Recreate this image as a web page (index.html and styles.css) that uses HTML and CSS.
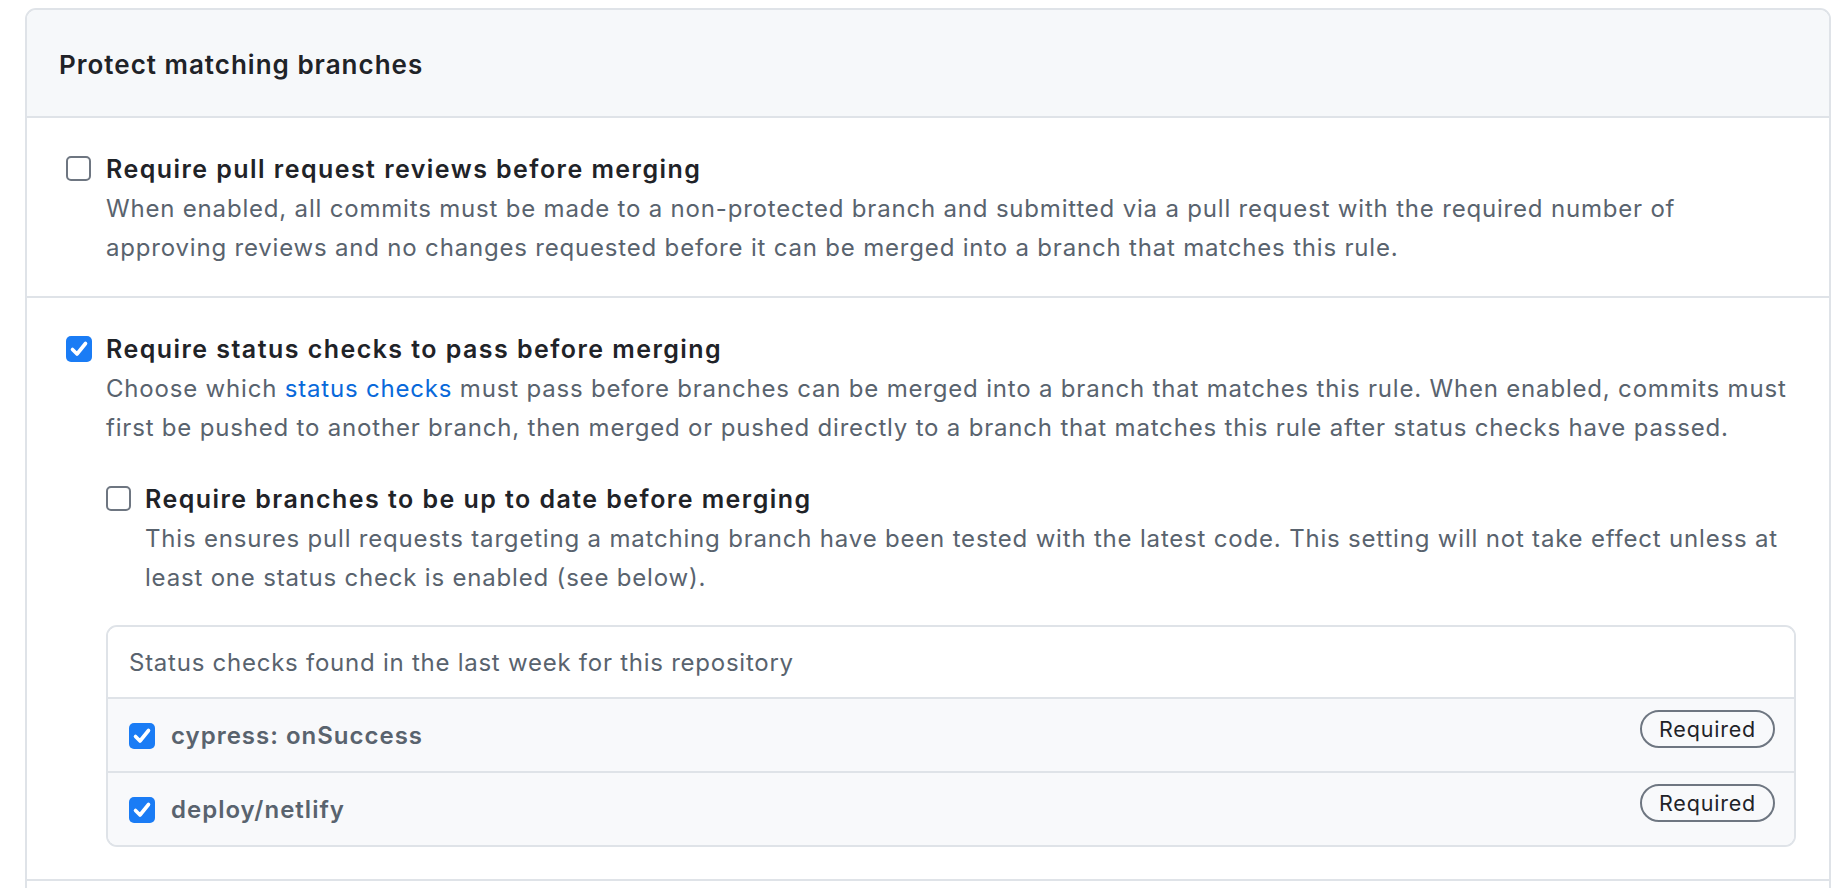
FILE: index.html
```html
<!DOCTYPE html>
<html lang="en">
<head>
<meta charset="utf-8">
<title>Protect matching branches</title>
<link rel="stylesheet" href="styles.css">
</head>
<body>
<div class="box">
  <div class="box-header">
    <h3 class="box-title">Protect matching branches</h3>
  </div>

  <div class="section">
    <div class="option">
      <span class="cb"></span>
      <div class="option-body">
        <div class="option-title">Require pull request reviews before merging</div>
        <p class="note">When enabled, all commits must be made to a non-protected branch and submitted via a pull request with the required number of<br>approving reviews and no changes requested before it can be merged into a branch that matches this rule.</p>
      </div>
    </div>
  </div>

  <div class="section">
    <div class="option">
      <span class="cb checked"><svg viewBox="0 0 26 26" width="26" height="26"><path d="M6.5 13.5 L11 18 L19.5 7.5" fill="none" stroke="#fff" stroke-width="3.6" stroke-linecap="round" stroke-linejoin="round"/></svg></span>
      <div class="option-body">
        <div class="option-title">Require status checks to pass before merging</div>
        <p class="note">Choose which <a class="link" href="#">status checks</a> must pass before branches can be merged into a branch that matches this rule. When enabled, commits must<br>first be pushed to another branch, then merged or pushed directly to a branch that matches this rule after status checks have passed.</p>

        <div class="option sub">
          <span class="cb"></span>
          <div class="option-body">
            <div class="option-title">Require branches to be up to date before merging</div>
            <p class="note">This ensures pull requests targeting a matching branch have been tested with the latest code. This setting will not take effect unless at<br>least one status check is enabled (see below).</p>
          </div>
        </div>

        <div class="checks">
          <div class="checks-header">Status checks found in the last week for this repository</div>
          <div class="check-row">
            <span class="cb checked"><svg viewBox="0 0 26 26" width="26" height="26"><path d="M6.5 13.5 L11 18 L19.5 7.5" fill="none" stroke="#fff" stroke-width="3.6" stroke-linecap="round" stroke-linejoin="round"/></svg></span>
            <span class="check-name">cypress: onSuccess</span>
            <span class="badge">Required</span>
          </div>
          <div class="check-row">
            <span class="cb checked"><svg viewBox="0 0 26 26" width="26" height="26"><path d="M6.5 13.5 L11 18 L19.5 7.5" fill="none" stroke="#fff" stroke-width="3.6" stroke-linecap="round" stroke-linejoin="round"/></svg></span>
            <span class="check-name">deploy/netlify</span>
            <span class="badge">Required</span>
          </div>
        </div>
      </div>
    </div>
  </div>

  <div class="section last"></div>
</div>
</body>
</html>
```

FILE: styles.css
```css
* { box-sizing: border-box; }

html, body {
  margin: 0;
  padding: 0;
  background: #ffffff;
}

body {
  font-family: Inter, "Noto Sans", "Liberation Sans", sans-serif;
  color: #24292f;
  overflow: hidden;
}

.box {
  margin: 8px 17px 0 25px;
  border: 2px solid #dfe3e8;
  border-radius: 11px;
  background: #ffffff;
}

.box-header {
  background: #f6f8fa;
  border-bottom: 2px solid #dfe3e8;
  border-radius: 9px 9px 0 0;
  padding: 36px 32px 32px;
}

.box-title {
  margin: 0;
  font-size: 26px;
  line-height: 38px;
  font-weight: 600;
  letter-spacing: 1px;
  color: #1f2328;
}

.section {
  padding: 32px 33px 29px 39px;
  border-bottom: 2px solid #dfe3e8;
}

.section + .section {
  padding-bottom: 32px;
}

.section.last {
  border-bottom: 0;
  height: 80px;
}

.option {
  display: grid;
  grid-template-columns: 25px 1fr;
  column-gap: 15px;
  align-items: start;
}

.option.sub {
  margin-top: 33px;
  column-gap: 14px;
}

.cb {
  width: 25px;
  height: 25px;
  margin-top: 6px;
  border: 2px solid #6e7681;
  border-radius: 5px;
  background: #ffffff;
  display: flex;
  align-items: center;
  justify-content: center;
}

.cb.checked {
  border: 0;
  background: #1a7cf5;
  width: 26px;
  height: 26px;
}

.cb svg {
  display: block;
}

.option-title {
  font-size: 25px;
  line-height: 39px;
  font-weight: 600;
  letter-spacing: 1.45px;
  color: #1f2328;
}

.note {
  margin: 0;
  font-size: 24px;
  line-height: 39px;
  letter-spacing: 0.81px;
  white-space: nowrap;
  color: #59636e;
}

.link {
  color: #0969da;
  text-decoration: none;
}

.checks {
  margin-top: 28px;
  border: 2px solid #dfe3e8;
  border-radius: 11px;
  overflow: hidden;
}

.checks-header {
  height: 72px;
  padding: 0 21px;
  display: flex;
  align-items: center;
  font-size: 24px;
  letter-spacing: 0.75px;
  color: #59636e;
  border-bottom: 2px solid #dfe3e8;
  background: #ffffff;
}

.check-row {
  height: 74px;
  padding: 0 19px 0 21px;
  display: flex;
  align-items: center;
  background: #f8f9fb;
  border-bottom: 2px solid #dfe3e8;
}

.check-row:last-child {
  border-bottom: 0;
  height: 72px;
}

.check-row .cb {
  margin-top: 2px;
}

.check-name {
  margin-left: 16px;
  font-size: 24px;
  font-weight: 600;
  letter-spacing: 1px;
  color: #59636e;
  flex: 1;
}

.badge {
  display: inline-flex;
  align-items: center;
  height: 38px;
  padding: 0 17px;
  border: 2px solid #6e7681;
  border-radius: 20px;
  font-size: 21.5px;
  letter-spacing: 0.8px;
  color: #1f2328;
  margin-bottom: 12px;
}
```
